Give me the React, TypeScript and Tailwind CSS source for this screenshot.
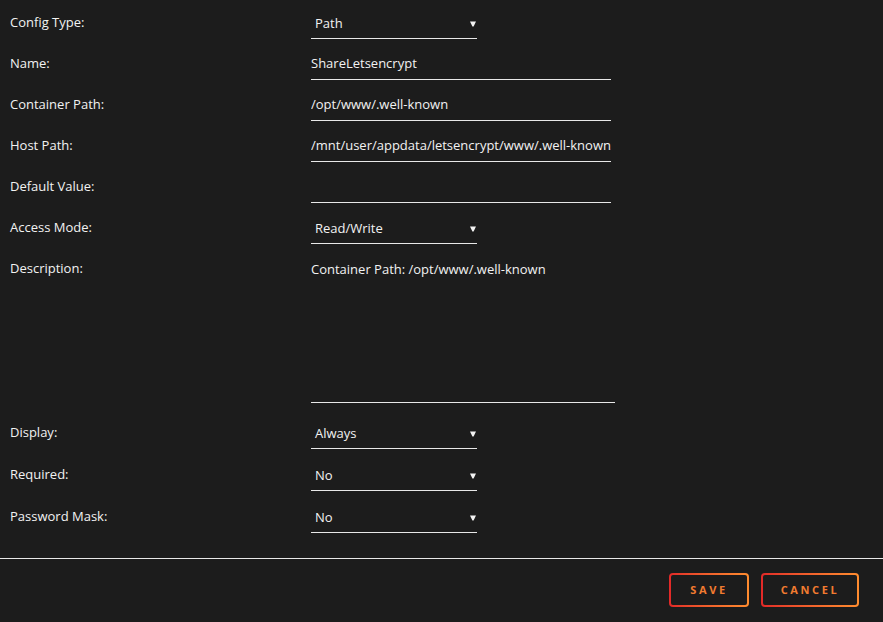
import { ReactNode } from 'react'

const Caret = () => (
  <svg width="6" height="6" viewBox="0 0 6 6" className="mt-[8px]" aria-hidden="true">
    <path d="M0 0.5H6L3.6 5.5H2.4Z" fill="#f2f2f2" />
  </svg>
)

const Row = ({ label, children, className = 'h-[41px]' }: { label: string; children: ReactNode; className?: string }) => (
  <div className={`grid grid-cols-[311px_1fr] ${className}`}>
    <div className="pl-[10px] pt-[12px] leading-[20px]">{label}</div>
    <div className="pt-[11px]">{children}</div>
  </div>
)

const Select = ({ value }: { value: string }) => (
  <div className="w-[166px] h-[28px] border-b border-[#e8e8e8] flex items-start justify-between pl-[4px] pr-[1px] pt-[2px] leading-[20px]">
    <span>{value}</span>
    <Caret />
  </div>
)

const Field = ({ value }: { value: string }) => (
  <div className="w-[300px] h-[28px] border-b border-[#e8e8e8] overflow-hidden whitespace-nowrap pt-[1px] leading-[20px]">
    {value}
  </div>
)

const Button = ({ label, width }: { label: string; width: string }) => (
  <div className={`${width} h-[34px] rounded-[4px] p-[2px] bg-gradient-to-r from-[#e22828] to-[#ff8c2f]`}>
    <div className="h-full w-full rounded-[2px] bg-[#1c1c1c] flex items-center justify-center">
      <span className="text-[11px] font-bold tracking-[2.6px] text-[#f27b30]">{label}</span>
    </div>
  </div>
)

export default function App() {
  return (
    <div className="w-[883px] h-[622px] bg-[#1c1c1c] text-[#f2f2f2] text-[13px] font-['Open_Sans',sans-serif] overflow-hidden">
      <Row label="Config Type:"><Select value="Path" /></Row>
      <Row label="Name:"><Field value="ShareLetsencrypt" /></Row>
      <Row label="Container Path:"><Field value="/opt/www/.well-known" /></Row>
      <Row label="Host Path:"><Field value="/mnt/user/appdata/letsencrypt/www/.well-known/" /></Row>
      <Row label="Default Value:"><Field value="" /></Row>
      <Row label="Access Mode:"><Select value="Read/Write" /></Row>
      <Row label="Description:" className="h-[164px]">
        <div className="w-[304px] h-[146px] border-b border-[#e8e8e8] leading-[20px] pt-[2px]">
          Container Path: /opt/www/.well-known
        </div>
      </Row>
      <Row label="Display:" className="h-[42px]"><Select value="Always" /></Row>
      <Row label="Required:" className="h-[42px]"><Select value="No" /></Row>
      <Row label="Password Mask:"><Select value="No" /></Row>
      <div className="mt-[23px] border-t border-[#e8e8e8]" />
      <div className="flex justify-end gap-[12px] pr-[24px] pt-[14px]">
        <Button label="SAVE" width="w-[80px]" />
        <Button label="CANCEL" width="w-[98px]" />
      </div>
    </div>
  )
}
